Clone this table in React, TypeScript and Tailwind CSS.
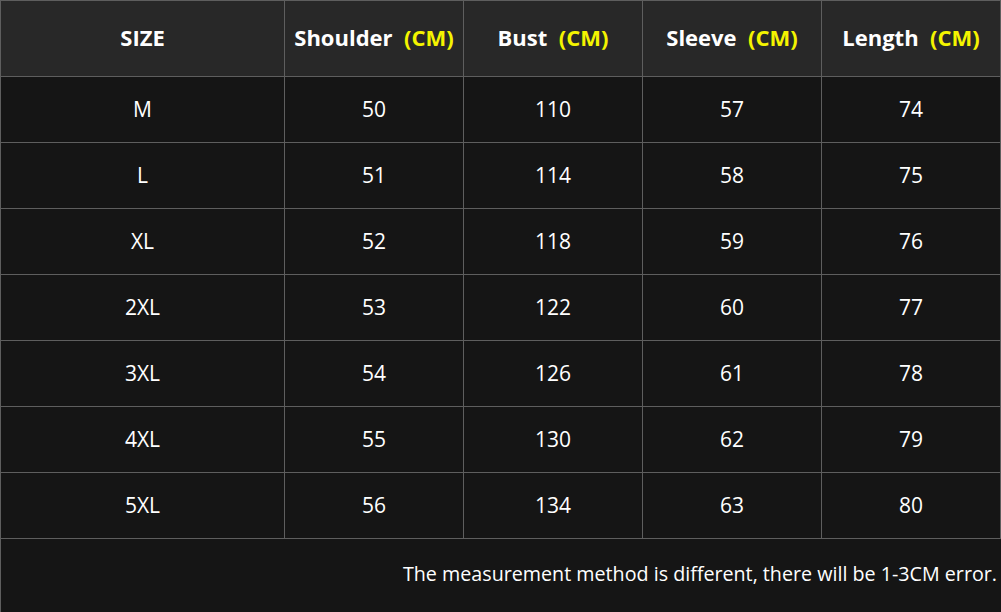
const headers = ['Shoulder', 'Bust', 'Sleeve', 'Length'];

const rows = [
  ['M', '50', '110', '57', '74'],
  ['L', '51', '114', '58', '75'],
  ['XL', '52', '118', '59', '76'],
  ['2XL', '53', '122', '60', '77'],
  ['3XL', '54', '126', '61', '78'],
  ['4XL', '55', '130', '62', '79'],
  ['5XL', '56', '134', '63', '80'],
];

const cell = 'flex items-center justify-center border-r border-b border-[#5e5e5e]';

export default function App() {
  return (
    <div className="w-[1001px] h-[612px] bg-[#151515] text-white font-['Open_Sans',sans-serif] overflow-hidden">
      <div className="grid grid-cols-[284px_179px_179px_179px_179px] border-l border-t border-[#5e5e5e]">
        <div className={`${cell} h-[76px] pb-[3px] bg-[#282828] text-[22px] font-bold`}>SIZE</div>
        {headers.map((h) => (
          <div key={h} className={`${cell} h-[76px] pb-[3px] bg-[#282828] text-[22px] font-bold whitespace-pre`}>
            {h}
            <span className="text-[#f4f400]">{'  (CM)'}</span>
          </div>
        ))}
        {rows.map((r) =>
          r.map((v, i) => (
            <div key={r[0] + i} className={`${cell} h-[66px] text-[21px]`}>
              {v}
            </div>
          ))
        )}
      </div>
      <div className="border-l border-[#5e5e5e] h-[73px] flex items-center justify-end pr-[4px] pb-[3px] text-[19.7px]">
        The measurement method is different, there will be 1-3CM error.
      </div>
    </div>
  );
}
